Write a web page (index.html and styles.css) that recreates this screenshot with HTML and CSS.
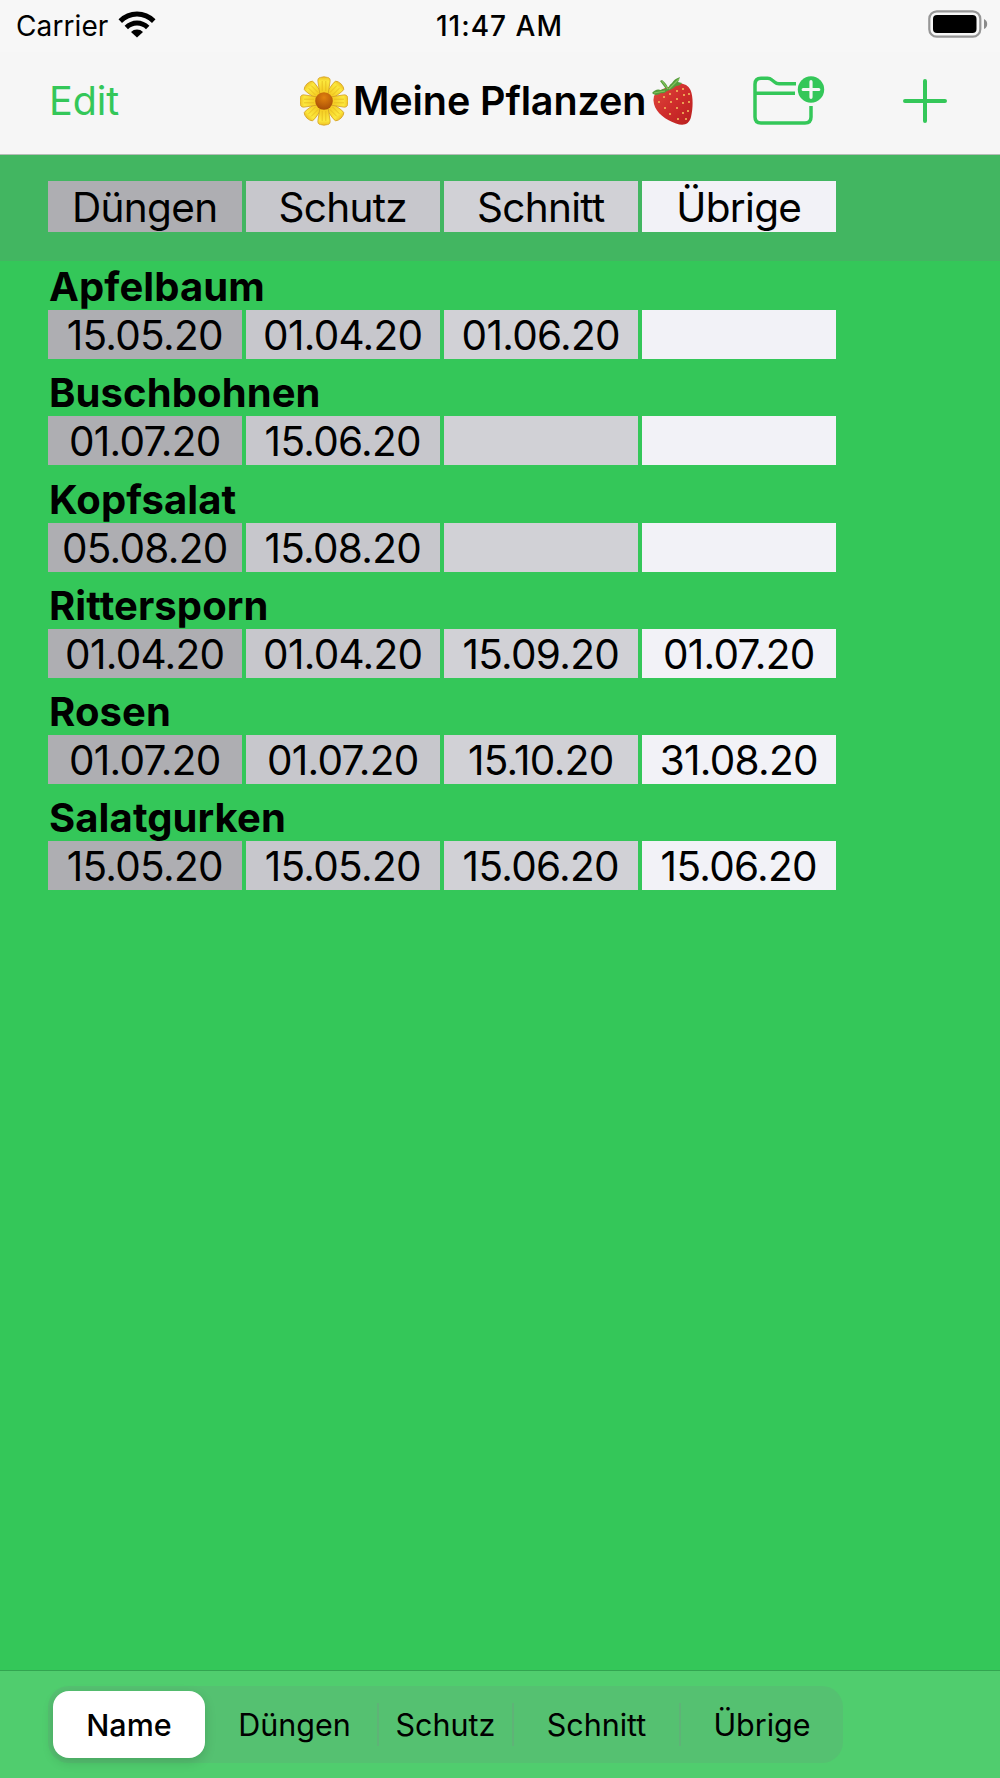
FILE: index.html
```html
<!DOCTYPE html>
<html lang="de">
<head>
    <meta charset="UTF-8">
    <meta name="viewport" content="width=device-width, initial-scale=1.0">
    <title>Meine Pflanzen</title>
    <link rel="stylesheet" href="styles.css">
</head>
<body>
    <div class="app">
        <header class="top">
            <div class="status">
                <div class="carrier">
                    <span class="carrierName">Carrier</span>
                    <svg class="wifi" width="38" height="28" viewBox="0 0 38 28">
                        <path d="M0.5 9.2A26 26 0 0 1 37.5 9.2L34 12.9A21 21 0 0 0 4 12.9Z"/>
                        <path d="M6.6 15.7A17.6 17.6 0 0 1 31.4 15.7L28 19.2A12.7 12.7 0 0 0 10 19.2Z"/>
                        <path d="M13 22A8.6 8.6 0 0 1 25 22L19 27.6Z"/>
                    </svg>
                </div>
                <div class="time">11:47 AM</div>
                <svg class="battery" width="60" height="28" viewBox="0 0 60 28">
                    <rect x="1.3" y="1.3" width="51" height="25.4" rx="7.5" fill="none" stroke="#969696" stroke-width="2.2"/>
                    <rect x="5" y="5" width="43.5" height="18" rx="4"/>
                    <path d="M56 9Q59.2 10.5 59.2 14T56 19Z" fill="#8a8a8a"/>
                </svg>
            </div>
            <nav class="navbar">
                <a class="edit">Edit</a>
                <h1 class="title">
                    <svg class="flower" width="48" height="50" viewBox="0 0 48 50">
                        <defs>
                            <linearGradient id="petalFill" x1="0" y1="0" x2="0" y2="1">
                                <stop offset="0" stop-color="#f0c326"/>
                                <stop offset=".25" stop-color="#fce83d"/>
                                <stop offset="1" stop-color="#f3c51c"/>
                            </linearGradient>
                            <radialGradient id="coreFill" cx=".5" cy=".3" r=".7">
                                <stop offset="0" stop-color="#e2820e"/>
                                <stop offset="1" stop-color="#a84e07"/>
                            </radialGradient>
                            <g id="petal">
                                <path d="M20 19L18 6Q17.2 1.8 20.6 1.4Q24 .2 27.4 1.4Q30.8 1.8 30 6L28 19Z" fill="url(#petalFill)" stroke="#d3a024" stroke-width=".8"/>
                                <path d="M22.2 5V15M25.8 5V15" stroke="#e3b61c" stroke-width=".7"/>
                            </g>
                        </defs>
                        <use href="#petal" transform="rotate(45 24 25)"/>
                        <use href="#petal" transform="rotate(135 24 25)"/>
                        <use href="#petal" transform="rotate(225 24 25)"/>
                        <use href="#petal" transform="rotate(315 24 25)"/>
                        <use href="#petal"/>
                        <use href="#petal" transform="rotate(90 24 25)"/>
                        <use href="#petal" transform="rotate(180 24 25)"/>
                        <use href="#petal" transform="rotate(270 24 25)"/>
                        <circle cx="24" cy="25" r="8.8" fill="url(#coreFill)"/>
                    </svg>
                    <span class="titleText">Meine Pflanzen</span>
                    <svg class="berry" width="42" height="50" viewBox="0 0 42 50">
                        <defs>
                            <linearGradient id="berryFill" x1="0" y1="0" x2="1" y2="1">
                                <stop offset="0" stop-color="#e04a3c"/>
                                <stop offset=".5" stop-color="#cf2d2c"/>
                                <stop offset="1" stop-color="#b9201f"/>
                            </linearGradient>
                        </defs>
                        <path d="M2 20C5 14 14 12 21 9.500C27 6 35 7 38.500 14C41.500 21 41 33 39 41C37 49 31 50 24 47.500C14 44 4 37 2 28Q1 23 2 20Z" fill="url(#berryFill)"/>
                        <path d="M0 17Q4 12 9 14Q12 12 14 13L8 5L10 4Q15 8 16 12Q18 8 20 7Q22 3 28 1L26 6L30 7Q28 10 24 10Q20 14 15 15Q12 18 9 17Q4 21 0 17Z" fill="#559b3b"/>
                        <path d="M10 5L16 13M17 13L27 3M2 17L13 15" stroke="#83c45c" stroke-width="1.2" fill="none"/>
                        <path class="seeds" d="M7 25v2M12 20v2M13 31v2M18 17v2M19 25v2M18 37v2M25 14v2M25 22v2M25 31v2M26 42v2M31 12v2M31 26v2M31 36v2M32 18v2M37 17v2M37 25v2M36 34v2M34 42v2"/>
                    </svg>
                </h1>
                <div class="actions">
                    <svg class="folder" width="72" height="50" viewBox="0 0 72 50">
                        <path d="M43 7.8H26Q23.500 7.800 21.500 6L19 4Q17 2.300 14.500 2.300H8Q2 2.300 2 8.300V41Q2 47 8 47H52Q58 47 58 41V30M2 17.300H42" fill="none" stroke="#34c759" stroke-width="3.500"/>
                        <circle cx="58" cy="13.5" r="13.2" fill="#34c759"/>
                        <path d="M58 5.7V21.3M50.2 13.5H65.8" stroke="#f6f6f6" stroke-width="3.2" stroke-linecap="round"/>
                    </svg>
                    <svg class="plus" width="44" height="44" viewBox="0 0 44 44">
                        <path d="M22 2V42M2 22H42" stroke="#34c759" stroke-width="4" stroke-linecap="round"/>
                    </svg>
                </div>
            </nav>
        </header>

        <div class="legend">
            <div class="cells">
                <div class="cell">Düngen</div>
                <div class="cell">Schutz</div>
                <div class="cell">Schnitt</div>
                <div class="cell">Übrige</div>
            </div>
        </div>

        <main class="plants">
            <section class="plant">
                <h2 class="name">Apfelbaum</h2>
                <div class="cells">
                    <div class="cell">15.05.20</div>
                    <div class="cell">01.04.20</div>
                    <div class="cell">01.06.20</div>
                    <div class="cell"></div>
                </div>
            </section>
            <section class="plant">
                <h2 class="name">Buschbohnen</h2>
                <div class="cells">
                    <div class="cell">01.07.20</div>
                    <div class="cell">15.06.20</div>
                    <div class="cell"></div>
                    <div class="cell"></div>
                </div>
            </section>
            <section class="plant">
                <h2 class="name">Kopfsalat</h2>
                <div class="cells">
                    <div class="cell">05.08.20</div>
                    <div class="cell">15.08.20</div>
                    <div class="cell"></div>
                    <div class="cell"></div>
                </div>
            </section>
            <section class="plant">
                <h2 class="name">Rittersporn</h2>
                <div class="cells">
                    <div class="cell">01.04.20</div>
                    <div class="cell">01.04.20</div>
                    <div class="cell">15.09.20</div>
                    <div class="cell">01.07.20</div>
                </div>
            </section>
            <section class="plant">
                <h2 class="name">Rosen</h2>
                <div class="cells">
                    <div class="cell">01.07.20</div>
                    <div class="cell">01.07.20</div>
                    <div class="cell">15.10.20</div>
                    <div class="cell">31.08.20</div>
                </div>
            </section>
            <section class="plant">
                <h2 class="name">Salatgurken</h2>
                <div class="cells">
                    <div class="cell">15.05.20</div>
                    <div class="cell">15.05.20</div>
                    <div class="cell">15.06.20</div>
                    <div class="cell">15.06.20</div>
                </div>
            </section>
        </main>

        <footer class="toolbar">
            <div class="segments">
                <div class="segment active">Name</div>
                <div class="segment wide">Düngen</div>
                <div class="segment line">Schutz</div>
                <div class="segment line">Schnitt</div>
                <div class="segment line wide">Übrige</div>
            </div>
        </footer>
    </div>
</body>
</html>
```
FILE: styles.css
```css
*{
    padding: 0;
    margin: 0;
    box-sizing: border-box;
}
body{
    font-family: Inter, "Liberation Sans", sans-serif;
    color: #000;
    background: #34c759;
}
svg{
    display: block;
    flex: none;
}
.app{
    width: 1000px;
    height: 1778px;
    display: flex;
    flex-direction: column;
    overflow: hidden;
}
.top{
    height: 155px;
    background: #f6f6f6;
    border-bottom: 1px solid #b5bdb7;
}
.status{
    height: 52px;
    padding: 0 12px 4px 16px;
    display: grid;
    grid-template-columns: 1fr auto 1fr;
    align-items: center;
    background: #f7f7f7;
}
.carrier{
    display: flex;
    align-items: center;
    gap: 10px;
}
.carrierName{
    font-size: 28px;
    line-height: 34px;
    padding-top: 3px;
    letter-spacing: .1px;
}
.time{
    font-size: 28px;
    line-height: 34px;
    font-weight: 500;
    padding-top: 4px;
    letter-spacing: 1px;
    margin-left: -5px;
}
.battery{
    justify-self: end;
}
.navbar{
    height: 102px;
    padding: 0 53px 4px 49px;
    display: flex;
    align-items: center;
}
.edit{
    width: 251px;
    color: #34c759;
    font-size: 39.5px;
    letter-spacing: -.1px;
}
.title{
    width: 400px;
    display: flex;
    align-items: center;
    font-size: 39.5px;
    font-weight: 600;
    letter-spacing: -.1px;
    white-space: nowrap;
}
.titleText{
    width: 304px;
    padding-left: 5px;
}
.actions{
    flex: 1;
    display: flex;
    justify-content: space-between;
    align-items: center;
    padding-left: 53px;
}
.seeds{
    stroke: #f0b35a;
    stroke-width: 1.7;
}
.legend{
    height: 106px;
    padding: 26px 0 0 48px;
    background: #42b661;
}
.cells{
    display: grid;
    grid-template-columns: repeat(4, 193.5px);
    gap: 4.5px;
}
.cell{
    height: 49px;
    line-height: 52px;
    text-align: center;
    font-size: 40.5px;
    letter-spacing: -.7px;
    background: #aeaeb2;
}
.cell:nth-child(2){
    background: #c7c7cc;
}
.cell:nth-child(3){
    background: #d1d1d6;
}
.cell:nth-child(4){
    background: #f2f2f7;
}
.legend .cell{
    height: 51px;
    line-height: 54px;
}
.plants{
    flex: 1;
    padding-left: 48px;
}
.plant{
    height: 106.25px;
}
.name{
    height: 49px;
    line-height: 51px;
    padding-left: 1px;
    font-size: 40px;
    font-weight: 700;
    letter-spacing: .1px;
}
.toolbar{
    height: 108px;
    padding: 15px 0 0 48px;
    background: #50cd6e;
    border-top: 1px solid #33a551;
}
.segments{
    width: 795px;
    height: 77px;
    padding: 5px;
    display: grid;
    grid-template-columns: 152px 173px 135px 167px 158px;
    border-radius: 21px;
    background: #55c171;
}
.segment{
    position: relative;
    display: flex;
    justify-content: center;
    align-items: center;
    font-size: 30.5px;
}
.segment.wide{
    padding-left: 6px;
}
.segment.active{
    background: #fff;
    border-radius: 16px;
    font-weight: 500;
    box-shadow: 0 4px 12px rgba(0,0,0,.14);
}
.segment.line::before{
    content: "";
    position: absolute;
    left: -1px;
    top: 12px;
    width: 2px;
    height: 43px;
    background: #5fb377;
}
```
